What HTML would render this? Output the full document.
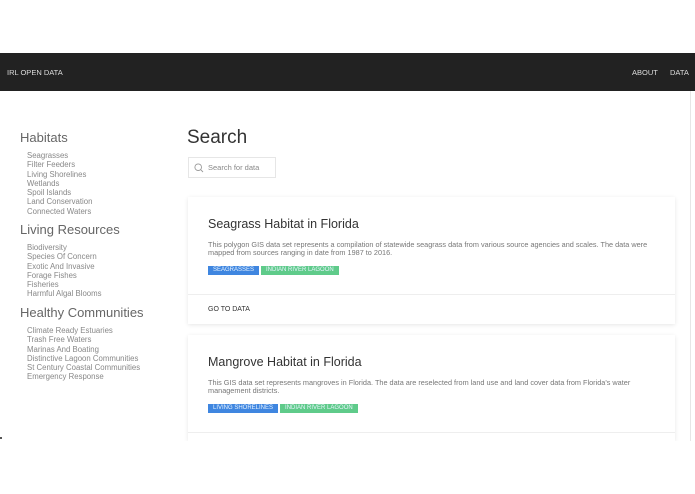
<!DOCTYPE html>
<html><head><style>
*{margin:0;padding:0;box-sizing:border-box}
body{width:695px;height:494px;background:#fff;font-family:"Liberation Sans",sans-serif;position:relative;overflow:hidden}
.a{position:absolute;white-space:nowrap}
.nav{position:absolute;left:0;top:53px;width:695px;height:38px;background:#222;color:#ddd;font-size:7.5px}
.h{font-size:13px;color:#666;left:20px}
.i{font-size:7.8px;color:#888;left:27px;line-height:9.3px}
.card{position:absolute;left:188px;width:487px;background:#fff;box-shadow:0 1px 4px rgba(0,0,0,.1)}
.t{font-size:12.5px;color:#333}
.d{font-size:7.3px;color:#777;line-height:8.3px;width:462px;white-space:normal}
.tags{display:flex}
.tag{display:block;font-size:6px;color:#e8f4ff;padding:0 5px;height:9px;line-height:9px;margin-right:2px}
</style></head><body>
<div class="nav"><span class="a" style="left:7px;top:15px">IRL OPEN DATA</span><span class="a" style="left:632px;top:15px">ABOUT</span><span class="a" style="left:670px;top:15px">DATA</span></div>
<div class="a" style="left:690px;top:91px;width:1px;height:350px;background:#e6e6e6"></div>
<div class="a h" style="top:130px">Habitats</div>
<div class="a i" style="top:151px">Seagrasses<br>Filter Feeders<br>Living Shorelines<br>Wetlands<br>Spoil Islands<br>Land Conservation<br>Connected Waters</div>
<div class="a h" style="top:222px">Living Resources</div>
<div class="a i" style="top:243px">Biodiversity<br>Species Of Concern<br>Exotic And Invasive<br>Forage Fishes<br>Fisheries<br>Harmful Algal Blooms</div>
<div class="a h" style="top:305px">Healthy Communities</div>
<div class="a i" style="top:326px">Climate Ready Estuaries<br>Trash Free Waters<br>Marinas And Boating<br>Distinctive Lagoon Communities<br>St Century Coastal Communities<br>Emergency Response</div>
<div class="a" style="left:187px;top:127px;font-size:19px;color:#333">Search</div>
<div class="a" style="left:188px;top:157px;width:88px;height:21px;border:1px solid #e6e6e6">
<svg class="a" style="left:5px;top:5px" width="10" height="10" viewBox="0 0 10 10"><circle cx="4.2" cy="4.2" r="3.3" fill="none" stroke="#999" stroke-width=".9"/><path d="M6.6 6.6L9 9" stroke="#999" stroke-width=".9"/></svg>
<span class="a" style="left:19px;top:5px;font-size:7.5px;color:#888">Search for data</span></div>
<div class="card" style="top:197px;height:127px">
<div class="a t" style="left:20px;top:20px">Seagrass Habitat in Florida</div>
<div class="a d" style="left:20px;top:44px">This polygon GIS data set represents a compilation of statewide seagrass data from various source agencies and scales. The data were mapped from sources ranging in date from 1987 to 2016.</div>
<div class="a tags" style="left:20px;top:69px"><span class="tag" style="background:#3f86e0">SEAGRASSES</span><span class="tag" style="background:#5fcb8a">INDIAN RIVER LAGOON</span></div>
<div class="a" style="left:0;top:97px;width:487px;height:1px;background:#eee"></div>
<div class="a" style="left:20px;top:109px;font-size:7px;color:#333">GO TO DATA</div>
</div>
<div class="card" style="top:335px;height:106px">
<div class="a t" style="left:20px;top:20px">Mangrove Habitat in Florida</div>
<div class="a d" style="left:20px;top:44px">This GIS data set represents mangroves in Florida. The data are reselected from land use and land cover data from Florida's water management districts.</div>
<div class="a tags" style="left:20px;top:69px"><span class="tag" style="background:#3f86e0">LIVING SHORELINES</span><span class="tag" style="background:#5fcb8a">INDIAN RIVER LAGOON</span></div>
<div class="a" style="left:0;top:97px;width:487px;height:1px;background:#eee"></div>
</div>
<div class="a" style="left:0;top:441px;width:695px;height:53px;background:#fff"></div>
<div class="a" style="left:0;top:437px;width:2px;height:2px;background:#555"></div>
</body></html>
